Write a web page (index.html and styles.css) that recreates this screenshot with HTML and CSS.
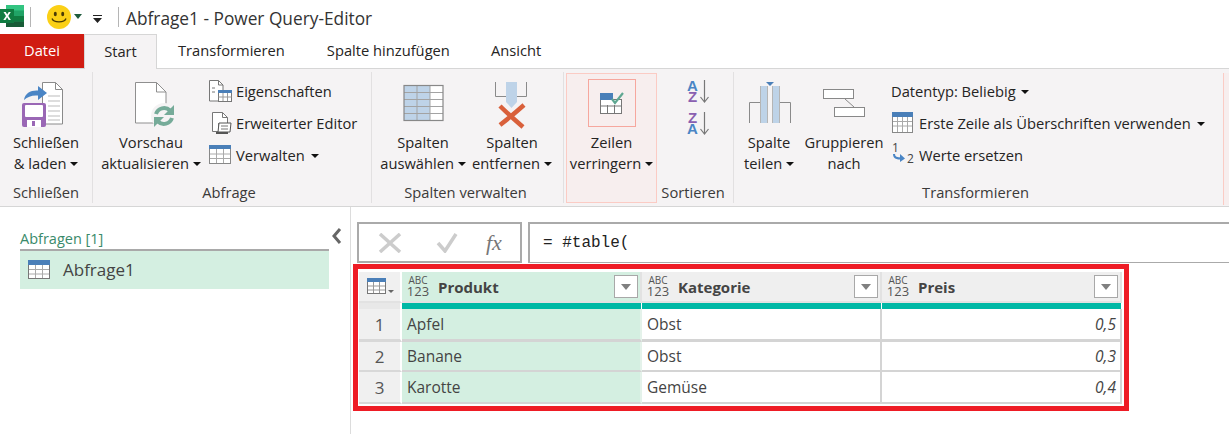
FILE: index.html
```html
<!DOCTYPE html>
<html lang="de">
<head>
<meta charset="utf-8">
<title>Abfrage1 - Power Query-Editor</title>
<link rel="stylesheet" href="styles.css">
</head>
<body>
<header class="titlebar">
  <svg class="ic-excel" width="24" height="22" viewBox="0 0 24 22"><rect x="6" width="18" height="22" fill="#21a366"/><rect x="6" width="18" height="5.5" fill="#33c481"/><rect x="6" y="11" width="18" height="5.5" fill="#107c41"/><rect x="6" y="16.5" width="18" height="5.5" fill="#185c37"/><rect y="4" width="14" height="14" fill="#107c41"/><path d="M3.5 7h2.2l1.5 2.6L8.7 7h2.1L8.3 11l2.6 4H8.7L7.1 12.300 5.500 15H3.300l2.700-4z" fill="#fff"/></svg>
  <i class="vsep"></i>
  <svg class="ic-smile" width="24" height="24" viewBox="0 0 24 24"><circle cx="12" cy="12" r="12" fill="#fbd016"/><ellipse cx="8.300" cy="9" rx="1.500" ry="2.200" fill="#4a3b05"/><ellipse cx="15.700" cy="9" rx="1.500" ry="2.200" fill="#4a3b05"/><path d="M5 13.500c1.500 4.500 12.500 4.500 14 0" fill="none" stroke="#4a3b05" stroke-width="1.300"/></svg>
  <svg class="ic-dd" width="8" height="5" viewBox="0 0 8 5"><path d="M0 0h8L4 5z" fill="#1f5c3d"/></svg>
  <svg class="ic-qat" width="9" height="9" viewBox="0 0 9 9"><path d="M0 0h9v1H0zM0 3h9L4.500 8z" fill="#222"/></svg>
  <i class="vsep vsep-2"></i>
  <h1 class="title">Abfrage1 - Power Query-Editor</h1>
</header>
<nav class="tabs">
  <span class="tab tab-file">Datei</span>
  <span class="tab tab-active">Start</span>
  <span class="tab tab-a">Transformieren</span>
  <span class="tab tab-b">Spalte hinzufügen</span>
  <span class="tab tab-c">Ansicht</span>
</nav>
<section class="ribbon">
  <div class="group g-close">
    <div class="gbody">
      <div class="big w-close">
        <svg class="bigicon" width="60" height="60" viewBox="0 0 60 60"><path d="M26.500 10.500h13l7 7v34.500h-20z" fill="#fff" stroke="#8a8a8a"/><path d="M39.500 10.500v7h7" fill="none" stroke="#8a8a8a"/><path d="M32 24h12M32 29h12M32 34h12M32 39h12M32 44h12M32 48h12" stroke="#bbb"/><path d="M8 28c1-7 7-10 14-9.500V14l9 7-9 7v-4.500c-6-.5-10 1-14 4.500z" fill="#4a85c5"/><rect x="6" y="31" width="24" height="24" rx="2" fill="#9a67b5"/><rect x="9" y="33" width="18" height="12" rx="1" fill="#fff"/><rect x="11" y="48" width="14" height="7" fill="#fff"/><rect x="16" y="49" width="3" height="5" fill="#9a67b5"/></svg>
        <span class="t">Schließen</span>
        <span class="t">&amp; laden <i class="caret"></i></span>
      </div>
    </div>
    <div class="glabel">Schließen</div>
  </div>
  <div class="group g-query">
    <div class="gbody">
      <div class="big w-refresh">
        <svg class="bigicon" width="60" height="60" viewBox="0 0 60 60"><path d="M14.500 10.500h21l9.500 9.500v31H14.500z" fill="#fff" stroke="#8f8f8f"/><path d="M35.500 10.500v9.500H45" fill="none" stroke="#8f8f8f"/><circle cx="43" cy="44" r="13" fill="#f5f3f4"/><path d="M35 42a8.500 8.500 0 0 1 14-3.500" fill="none" stroke="#76ab99" stroke-width="4"/><path d="M53 33v10H43z" fill="#76ab99"/><path d="M51 46a8.500 8.500 0 0 1-14 3.500" fill="none" stroke="#76ab99" stroke-width="4"/><path d="M33 55V45h10z" fill="#76ab99"/></svg>
        <span class="t">Vorschau</span>
        <span class="t">aktualisieren <i class="caret"></i></span>
      </div>
      <div class="smallcol">
        <div class="small"><svg class="smallicon" width="24" height="24" viewBox="0 0 24 24"><path d="M1.500 1.500h9l4.500 4.500v6h-4v10h-9.500z" fill="#fff" stroke="#777"/><path d="M10.500 1.500V6H15" fill="none" stroke="#777"/><path d="M4 9h3M4 13h3" stroke="#777"/><rect x="10.500" y="11.500" width="13" height="11" fill="#fff" stroke="#777"/><rect x="10" y="11" width="14" height="3" fill="#4a7fb8"/><path d="M15 14v8M19.500 14v8M10.500 18h13" stroke="#999"/></svg><span>Eigenschaften</span></div>
        <div class="small"><svg class="smallicon" width="24" height="24" viewBox="0 0 24 24"><path d="M4.500 1.500h10l5 5v6h-9v8h-6z" fill="#fff" stroke="#777"/><path d="M14.500 1.500v5h5" fill="none" stroke="#777"/><path d="M11 12h12l-1 9H10z" fill="#fff" stroke="#555"/><path d="M13 15h7M13 18h7" stroke="#777"/><rect x="8" y="21" width="12" height="2" fill="#555"/></svg><span>Erweiterter Editor</span></div>
        <div class="small"><svg class="smallicon" width="24" height="24" viewBox="0 0 24 24"><rect x="1.500" y="2.500" width="21" height="18" fill="#fff" stroke="#888"/><rect x="1" y="2" width="22" height="4" fill="#4a7fb8"/><path d="M8.500 6v14M15.500 6v14M2 11h20M2 15.500h20" stroke="#aaa"/></svg><span>Verwalten <i class="caret caret-s"></i></span></div>
      </div>
    </div>
    <div class="glabel glabel-q">Abfrage</div>
  </div>
  <div class="group g-cols">
    <div class="gbody">
      <div class="big w-select">
        <svg class="bigicon" width="60" height="60" viewBox="0 0 60 60"><rect x="11" y="13.500" width="39" height="35" fill="#fff"/><rect x="11" y="13.500" width="26" height="35" fill="#bed3e8"/><path d="M24 13.500v35M37 13.500v35M11 20.500h39M11 27.500h39M11 34.500h39M11 41.500h39" stroke="#a3a3a3"/><rect x="11" y="13.500" width="39" height="35" fill="none" stroke="#888" stroke-width="1.200"/></svg>
        <span class="t">Spalten</span>
        <span class="t">auswählen <i class="caret"></i></span>
      </div>
      <div class="big w-remove">
        <svg class="bigicon" width="60" height="60" viewBox="0 0 60 60"><path d="M13.500 10v14.500H24M44.500 10v14.500H35" fill="none" stroke="#8a8a8a"/><path d="M24 10h11v20l-5.500 6-5.500-6z" fill="#bed3e8"/><path d="M18 34q8 8 23 21M42 33Q32 42 18 53" fill="none" stroke="#d9603b" stroke-width="4.500"/></svg>
        <span class="t">Spalten</span>
        <span class="t">entfernen <i class="caret"></i></span>
      </div>
    </div>
    <div class="glabel glabel-c">Spalten verwalten</div>
  </div>
  <div class="group g-rows">
    <div class="hl">
      <div class="hlbox">
        <svg width="24" height="24" viewBox="0 0 24 24"><rect x=".5" y="8.500" width="21" height="14" fill="#fff" stroke="#777"/><rect y="2" width="13" height="7" fill="#4a7fb8"/><path d="M7.500 14v8M14.500 14v8M1 15h20" stroke="#777"/><path d="M12 8l3 4 8-10" fill="none" stroke="#5fa892" stroke-width="2.200"/></svg>
      </div>
      <span class="t">Zeilen</span>
      <span class="t">verringern <i class="caret"></i></span>
    </div>
  </div>
  <div class="group g-sort">
    <div class="gbody sortbody">
      <div class="sortrow"><span class="az"><b class="blue">A</b><b class="purple">Z</b></span><svg width="9" height="24" viewBox="0 0 9 24"><path d="M4.500 0v22M.5 17l4 5 4-5" fill="none" stroke="#777" stroke-width="1.200"/></svg></div>
      <div class="sortrow"><span class="az"><b class="purple">Z</b><b class="blue">A</b></span><svg width="9" height="24" viewBox="0 0 9 24"><path d="M4.500 0v22M.5 17l4 5 4-5" fill="none" stroke="#777" stroke-width="1.200"/></svg></div>
    </div>
    <div class="glabel glabel-c">Sortieren</div>
  </div>
  <div class="group g-trans">
    <div class="gbody">
      <div class="big w-split">
        <svg class="bigicon" width="60" height="60" viewBox="0 0 60 60"><path d="M10.500 51V30.500H22M51.500 51V30.500H40" fill="none" stroke="#8a8a8a"/><rect x="22" y="14" width="6" height="37" fill="#bed3e8"/><rect x="34" y="14" width="6" height="37" fill="#bed3e8"/><path d="M21.500 14v37M28.500 14v37M33.500 14v37M40.500 14v37" stroke="#b5b5b5"/><path d="M27 10h8l-4 4z" fill="#4a7fb8"/></svg>
        <span class="t">Spalte</span>
        <span class="t">teilen <i class="caret"></i></span>
      </div>
      <div class="big w-group">
        <svg class="bigicon" width="60" height="60" viewBox="0 0 60 60"><rect x="9.500" y="17.500" width="30" height="9" fill="#fff" stroke="#888"/><rect x="20.500" y="35.500" width="30" height="9" fill="#fff" stroke="#888"/><path d="M31 27l9 8" stroke="#888" fill="none"/></svg>
        <span class="t">Gruppieren</span>
        <span class="t">nach</span>
      </div>
      <div class="smallcol smallcol-t">
        <div class="small"><span>Datentyp: Beliebig <i class="caret caret-s"></i></span></div>
        <div class="small"><svg class="smallicon" width="24" height="24" viewBox="0 0 24 24"><rect x="1.500" y="1.500" width="20" height="20" fill="#fff" stroke="#888"/><rect x="1" y="1" width="21" height="5" fill="#4a7fb8"/><path d="M6.500 6v15M11.500 6v15M16.500 6v15M2 10.500h19M2 15h19" stroke="#aaa"/></svg><span>Erste Zeile als Überschriften verwenden <i class="caret caret-s"></i></span></div>
        <div class="small small-replace"><span class="repl"><em>1</em><svg width="13" height="8" viewBox="0 0 13 8"><path d="M1 0c0 4 3 4.500 8 4.500" fill="none" stroke="#4a85c5" stroke-width="2"/><path d="M7 0l5 4.500L7 8z" fill="#4a85c5"/></svg><em class="two">2</em></span><span>Werte ersetzen</span></div>
      </div>
    </div>
    <div class="glabel glabel-t">Transformieren</div>
  </div>
  <div class="hl-edge"></div>
</section>
<main class="main">
  <aside class="queries">
    <div class="qhead">
      <span class="qtitle">Abfragen [1]</span>
      <svg class="chev" width="11" height="16" viewBox="0 0 11 16"><path d="M9 1L3 8l6 7" fill="none" stroke="#666" stroke-width="3"/></svg>
    </div>
    <div class="qitem">
      <svg width="22" height="19" viewBox="0 0 22 19"><rect x=".5" y=".5" width="21" height="18" fill="#fff" stroke="#777"/><rect width="22" height="5" fill="#4a7fb8"/><path d="M7.500 5v13M14.500 5v13M1 9.500h20M1 14h20" stroke="#aaa"/></svg>
      <span>Abfrage1</span>
    </div>
  </aside>
  <div class="content">
    <div class="fbar">
      <div class="fbtns">
        <svg width="24" height="20" viewBox="0 0 24 20"><path d="M2 1l20 18M22 1L2 19" stroke="#ccc" stroke-width="3.500"/></svg>
        <svg width="22" height="20" viewBox="0 0 22 20"><path d="M2 10l7 8L20 1" fill="none" stroke="#ccc" stroke-width="3.500"/></svg>
        <span class="fx">fx</span>
      </div>
      <div class="finput">= #table(</div>
    </div>
    <div class="redbox">
      <div class="grid">
        <div class="corner"><svg width="28" height="17" viewBox="0 0 28 17"><rect x=".5" y=".5" width="18" height="15" fill="#fff" stroke="#777"/><rect width="19" height="4" fill="#4a7fb8"/><path d="M6.500 4v11M12.500 4v11M1 8h17M1 12h17" stroke="#999"/><path d="M21 12h6l-3 3z" fill="#666"/></svg></div>
        <div class="hcell hcell-sel"><span class="typ"><small>ABC</small><span>123</span></span><b>Produkt</b><span class="filter"><i></i></span></div>
        <div class="hcell"><span class="typ"><small>ABC</small><span>123</span></span><b>Kategorie</b><span class="filter"><i></i></span></div>
        <div class="hcell"><span class="typ"><small>ABC</small><span>123</span></span><b>Preis</b><span class="filter"><i></i></span></div>

        <div class="num-blank"></div><div class="teal"></div><div class="teal"></div><div class="teal"></div>

        <div class="num r1">1</div><div class="cell sel r1">Apfel</div><div class="cell r1">Obst</div><div class="cell val r1">0,5</div>
        <div class="num">2</div><div class="cell sel">Banane</div><div class="cell">Obst</div><div class="cell val">0,3</div>
        <div class="num r3">3</div><div class="cell sel r3">Karotte</div><div class="cell r3">Gemüse</div><div class="cell val r3">0,4</div>
      </div>
    </div>
  </div>
</main>
</body>
</html>
```
FILE: styles.css
```css
* { box-sizing: border-box; }
html, body { margin: 0; padding: 0; }
body {
  width: 1229px; height: 434px; overflow: hidden; background: #fff;
  font-family: "Open Sans", "Liberation Sans", sans-serif; font-size: 14.7px; color: #252423;
}
.titlebar { height: 34px; display: flex; align-items: center; }
.ic-excel { margin-top: -2px; flex: none; }
.vsep { width: 1px; height: 20px; background: #b5b5b5; margin-left: 6px; flex: none; }
.vsep-2 { margin-left: 16px; }
.ic-smile { margin-left: 16px; flex: none; }
.ic-dd { margin-left: 3px; margin-top: -2px; flex: none; }
.ic-qat { margin-left: 11px; margin-top: 4px; flex: none; }
.title { font-weight: 400; font-size: 17.3px; margin: 2px 0 0 7px; color: #333; white-space: nowrap; }

.tabs { height: 34px; display: flex; align-items: center; position: relative; }
.tab { height: 34px; line-height: 33px; white-space: nowrap; }
.tab-file { width: 84px; background: #d01c12; color: #fff; text-align: center; }
.tab-active { width: 73px; text-align: center; border: 1px solid #d6d6d6; border-bottom: 0; background: #f5f3f4; height: 35px; margin-bottom: -1px; z-index: 1; }
.tab-a { margin-left: 21px; }
.tab-b { margin-left: 42px; }
.tab-c { margin-left: 41px; }

.ribbon { height: 139px; display: flex; background: #f5f3f4; border-top: 1px solid #d6d6d6; border-bottom: 1px solid #d6d6d6; padding-top: 3px; }
.group { height: 131px; display: flex; flex-direction: column; align-items: stretch; flex: none; border-right: 1px solid #e2e0e1; }
.g-close { width: 93px; }
.g-query { width: 279px; }
.g-cols { width: 192px; }
.g-rows { width: 93px; border-right: 0; padding-left: 2px; }
.g-sort { width: 77px; }
.g-trans { width: 489px; border-right: 0; }
.gbody { height: 110px; display: flex; }
.glabel { height: 20px; line-height: 20px; text-align: center; white-space: nowrap; color: #3b3a39; }
.glabel-q { padding-right: 6px; }
.glabel-t { padding-right: 6px; }
.glabel-c { padding-right: 4px; }
.big { display: flex; flex-direction: column; align-items: center; flex: none; }
.bigicon { display: block; height: 60px; flex: none; }
.t { height: 20px; line-height: 20px; white-space: nowrap; }
.t + .t { margin-top: 1px; }
.w-close { width: 92px; }
.w-refresh { width: 102px; margin-left: 7px; }
.w-select { width: 90px; margin-left: 6px; }
.w-remove { width: 80px; margin-left: 4px; }
.w-split { width: 66px; margin-left: 2px; }
.w-group { width: 80px; margin-left: 2px; }
.caret { display: inline-block; width: 0; height: 0; border: 4px solid transparent; border-top-color: #111; border-bottom: 0; vertical-align: 3px; }
.caret-s { margin-left: 2px; }
.smallcol { display: flex; flex-direction: column; padding-top: 3px; margin-left: 6px; }
.smallcol-t { margin-left: 7px; }
.small { height: 32px; display: flex; align-items: center; white-space: nowrap; }
.smallicon { margin-right: 4px; flex: none; }
.repl { position: relative; width: 28px; height: 28px; flex: none; font-size: 12px; margin-right: 0; }
.repl em { position: absolute; left: 1px; top: -2px; font-style: normal; font-size: 12px; color: #444; }
.repl svg { position: absolute; left: 2px; top: 13px; }
.repl .two { left: 16px; top: 9px; }

.hl { width: 91px; height: 132px; margin-top: 1px; background: #f7eeee; border: 1px solid #fbcbc4; display: flex; flex-direction: column; align-items: center; }
.hlbox { width: 48px; height: 48px; margin-top: 5px; margin-bottom: 5px; border: 1px solid #f6a79e; display: flex; align-items: center; justify-content: center; flex: none; }
.sortbody { flex-direction: column; align-items: center; padding-top: 8px; gap: 8px; }
.sortrow { display: flex; height: 24px; gap: 2px; align-items: flex-start; margin-left: 6px; }
.az { display: flex; flex-direction: column; width: 11px; align-items: center; }
.az b { font-size: 15px; line-height: 11px; height: 11px; font-weight: 700; font-family: "Liberation Sans", sans-serif; }
.blue { color: #4a85c5; }
.purple { color: #8a5fb0; }
.hl-edge { flex: 1; background: #f7eeee; border-left: 1px solid #fbcbc4; height: 132px; margin-top: 1px; }

.main { display: flex; height: 227px; }
.queries { width: 351px; flex: none; border-right: 1px solid #dcdcdc; padding: 21px 0 0 20px; }
.qhead { position: relative; width: 309px; height: 22px; border-bottom: 2px solid #a9a9a9; }
.qtitle { font-size: 14.5px; line-height: 19px; color: #3a8a6a; display: block; margin-top: 1px; white-space: nowrap; }
.chev { position: absolute; right: -13px; top: -1px; }
.qitem { width: 309px; height: 38px; background: #d4efe1; display: flex; align-items: center; padding: 0 0 2px 8px; gap: 13px; font-size: 17px; color: #444; }
.content { flex: 1; min-width: 0; padding-top: 15px; }
.fbar { display: flex; height: 41px; margin-left: 6px; }
.fbtns { width: 165px; flex: none; border: 2px solid #aaa; background: #fff; display: flex; align-items: center; padding: 0 0 0 19px; }
.fbtns svg + svg { margin-left: 34px; }
.fx { font-family: "Liberation Serif", serif; font-style: italic; font-size: 22px; color: #777; margin-left: 28px; }
.finput { flex: 1; margin-left: 6px; border: 2px solid #aaa; border-right: 0; border-bottom: 1px solid #aaa; font-family: "Liberation Mono", monospace; font-size: 16px; color: #222; line-height: 38px; padding-left: 13px; white-space: nowrap; }
.redbox { width: 776px; height: 147px; margin: 1px 0 0 2px; border: 5px solid #ee1c25; padding: 3px 2px 2px 1px; background: #fff; }
.grid { display: grid; grid-template-columns: 43px 240px 240px 240px; grid-template-rows: 31px 6px 33px 30px 32px; }
.corner, .num, .num-blank { background: #f0f0f0; border-right: 2px solid #fff; }
.corner { border-bottom: 2px solid #e2e2e2; padding: 6px 0 0 8px; }
.corner svg { display: block; }
.num-blank { background: #e8e8e8; }
.hcell { background: #efefef; border-bottom: 2px solid #e2e2e2; border-right: 2px solid #e2e2e2; display: flex; align-items: center; padding-left: 5px; color: #444; position: relative; }
.hcell-sel { background: #d4efe1; }
.hcell b { font-size: 15px; font-weight: 700; margin-left: 9px; }
.typ { display: flex; flex-direction: column; align-items: center; width: 22px; line-height: 10px; font-size: 13px; color: #555; }
.typ small { font-size: 10px; line-height: 9px; }
.typ span { line-height: 12px; }
.filter { position: absolute; right: 2px; top: 3px; width: 24px; height: 23px; background: #fff; border: 1px solid #a8a8a8; display: flex; align-items: center; justify-content: center; }
.filter i { display: block; width: 0; height: 0; border: 5px solid transparent; border-top: 6px solid #808080; border-bottom: 0; }
.teal { background: #00b8a5; border-right: 1px solid #fff; }
.num { border-bottom: 2px solid #d8d8d8; display: flex; align-items: center; justify-content: center; font-size: 17px; color: #555; }
.cell { border-bottom: 2px solid #d4d4d4; border-right: 2px solid #d4d4d4; display: flex; align-items: center; padding-left: 5px; color: #444; font-size: 15.5px; }
.r1 { border-bottom-width: 3px; }
.cell.sel { background: #d4efe1; border-right-color: #e4f2ea; }
.val { justify-content: flex-end; padding: 0 4px 0 0; font-style: italic; }
```
